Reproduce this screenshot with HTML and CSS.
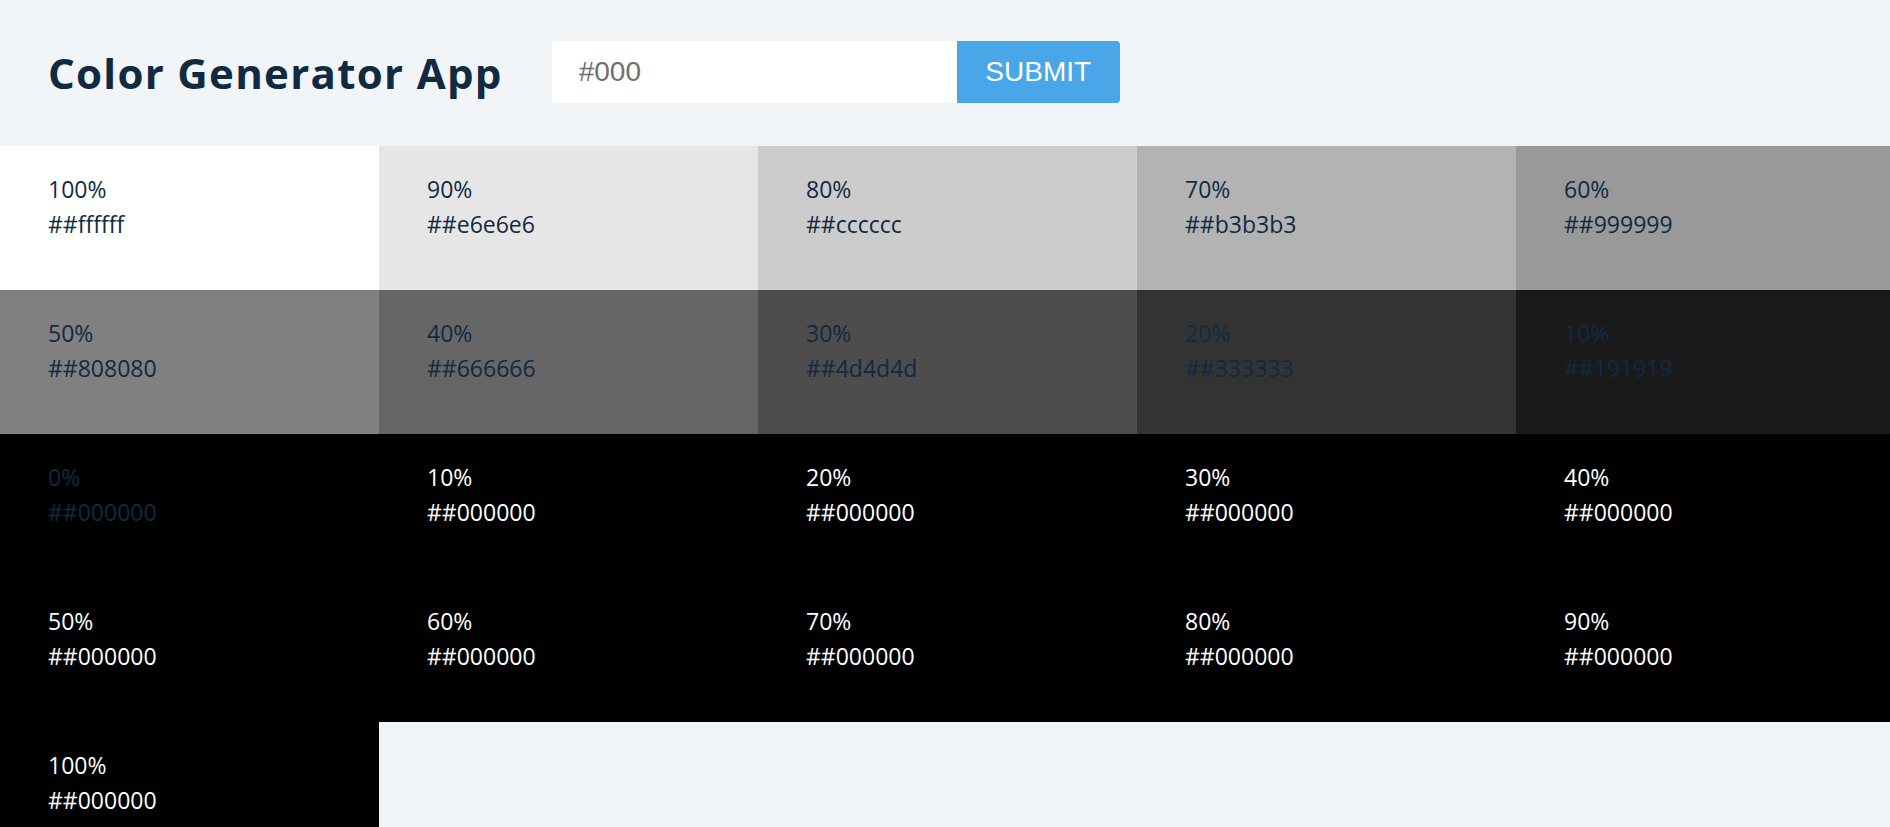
FILE: index.html
```html
<!DOCTYPE html>
<html lang="en">
<head>
<meta charset="utf-8">
<title>Color Generator App</title>
<link rel="stylesheet" href="styles.css">
</head>
<body>
<main class="app">
  <section class="container">
    <h3 class="title">Color Generator App</h3>
    <form class="form">
      <input class="color-input" type="text" value="#000">
      <button class="btn" type="button">submit</button>
    </form>
  </section>
  <section class="colors">
    <article class="color" style="background-color: #ffffff"><p class="percent">100%</p><p class="value">##ffffff</p></article>
    <article class="color" style="background-color: #e6e6e6"><p class="percent">90%</p><p class="value">##e6e6e6</p></article>
    <article class="color" style="background-color: #cccccc"><p class="percent">80%</p><p class="value">##cccccc</p></article>
    <article class="color" style="background-color: #b3b3b3"><p class="percent">70%</p><p class="value">##b3b3b3</p></article>
    <article class="color" style="background-color: #999999"><p class="percent">60%</p><p class="value">##999999</p></article>
    <article class="color" style="background-color: #808080"><p class="percent">50%</p><p class="value">##808080</p></article>
    <article class="color" style="background-color: #666666"><p class="percent">40%</p><p class="value">##666666</p></article>
    <article class="color" style="background-color: #4d4d4d"><p class="percent">30%</p><p class="value">##4d4d4d</p></article>
    <article class="color" style="background-color: #333333"><p class="percent">20%</p><p class="value">##333333</p></article>
    <article class="color" style="background-color: #1a1a1a"><p class="percent">10%</p><p class="value">##191919</p></article>
    <article class="color" style="background-color: #000000"><p class="percent">0%</p><p class="value">##000000</p></article>
    <article class="color color-light" style="background-color: #000000"><p class="percent">10%</p><p class="value">##000000</p></article>
    <article class="color color-light" style="background-color: #000000"><p class="percent">20%</p><p class="value">##000000</p></article>
    <article class="color color-light" style="background-color: #000000"><p class="percent">30%</p><p class="value">##000000</p></article>
    <article class="color color-light" style="background-color: #000000"><p class="percent">40%</p><p class="value">##000000</p></article>
    <article class="color color-light" style="background-color: #000000"><p class="percent">50%</p><p class="value">##000000</p></article>
    <article class="color color-light" style="background-color: #000000"><p class="percent">60%</p><p class="value">##000000</p></article>
    <article class="color color-light" style="background-color: #000000"><p class="percent">70%</p><p class="value">##000000</p></article>
    <article class="color color-light" style="background-color: #000000"><p class="percent">80%</p><p class="value">##000000</p></article>
    <article class="color color-light" style="background-color: #000000"><p class="percent">90%</p><p class="value">##000000</p></article>
    <article class="color color-light" style="background-color: #000000"><p class="percent">100%</p><p class="value">##000000</p></article>
  </section>
</main>
</body>
</html>
```
FILE: styles.css
```css
* {
  box-sizing: border-box;
}

html,
body {
  margin: 0;
  padding: 0;
}

body {
  background: #f1f5f8;
  color: #102a42;
  font-family: "Open Sans", "Noto Sans", sans-serif;
}

.app {
  height: 100vh;
  display: flex;
  flex-direction: column;
  overflow: hidden;
}

.container {
  flex: 0 0 146px;
  display: flex;
  align-items: center;
  padding-left: 48px;
  padding-bottom: 2px;
}

.title {
  margin: 0 49px 0 0;
  font-size: 42px;
  font-weight: 700;
  letter-spacing: 1.3px;
  color: #102a42;
}

.form {
  display: flex;
  height: 62px;
  margin: 0;
}

.color-input {
  width: 405px;
  height: 62px;
  border: none;
  outline: none;
  padding: 0 27px;
  font-family: "Liberation Sans", Arial, sans-serif;
  font-size: 28px;
  color: #6f6f6f;
  background: #ffffff;
  border-radius: 4px 0 0 4px;
}

.btn {
  width: 163px;
  height: 62px;
  border: none;
  background: #49a6e9;
  color: #ffffff;
  font-family: "Liberation Sans", Arial, sans-serif;
  font-size: 28px;
  text-transform: uppercase;
  border-radius: 0 4px 4px 0;
  padding: 0;
}

.colors {
  display: grid;
  grid-template-columns: repeat(5, 379px);
  grid-auto-rows: 144px;
  flex: none;
}

.color {
  padding: 26px 48px;
  font-size: 23px;
  line-height: 35px;
  color: #102a42;
}

.color p {
  margin: 0;
}

.color-light {
  color: #ffffff;
}
```
